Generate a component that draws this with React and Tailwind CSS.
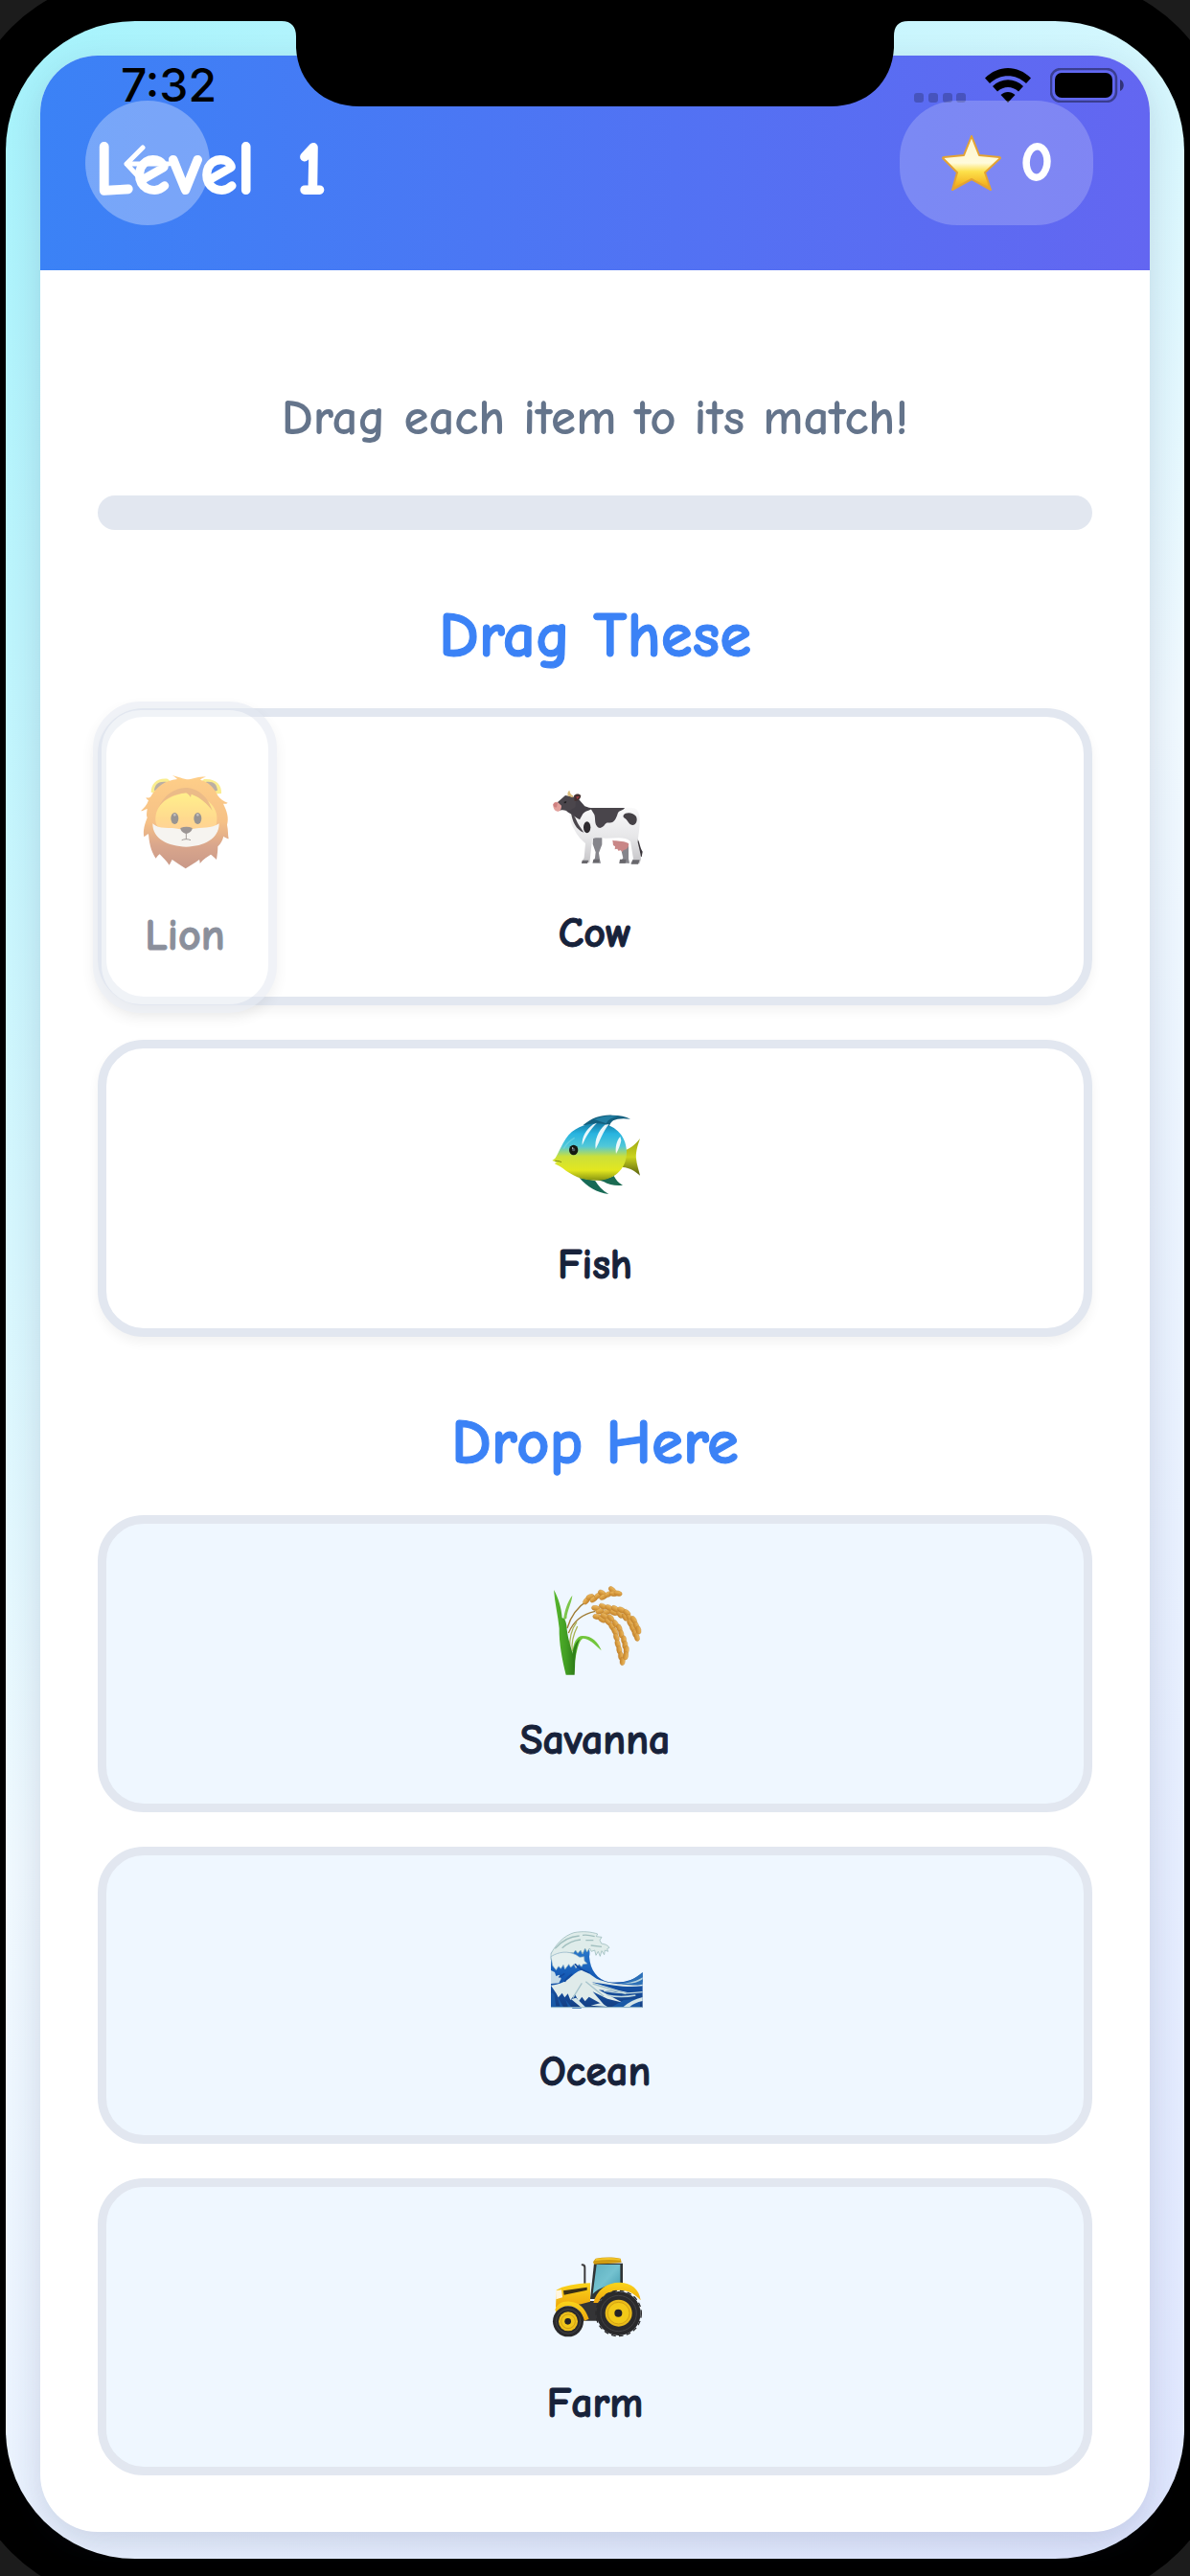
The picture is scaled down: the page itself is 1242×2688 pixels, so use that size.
function Cow() {
  return (
    <svg viewBox="93 87 300 300" className="size-[100px]" aria-hidden="true">
      <defs>
        <linearGradient id="cowBody" x1="0" y1="0" x2="0" y2="1">
          <stop offset="0" stopColor="#fbfbfb" />
          <stop offset="0.55" stopColor="#e6e6e8" />
          <stop offset="1" stopColor="#c4c3c6" />
        </linearGradient>
      </defs>
      <path d="M372 280c12 14 11 34 20 46l-3 17c-14-8-17-24-22-38z" fill="#39353a" />
      <path d="M237 280l28 0 0 24-10 26 3 20 3 12-26 0 8-16 2-18-9-26zM320 300l28 0 0 48 3 14-32 0 12-16z" fill="#85858b" />
      <path d="M160 196l40-14c20 6 30 8 48 8h85c32-6 48 0 50 30 1 30-4 52-6 76l9 40 1 14-5 14h-29l10-16-9-54c-20-18-52-8-80-10-20 0-30-4-40 4l-6 56-2 17h-25l8-16 4-45c-18-16-26-26-34-42-12-16-14-36-19-62z" fill="url(#cowBody)" />
      <path d="M146 190l13-34 28 0 24 28c10 4 16 5 26 6-10 8-24 8-32 18-4 6-6 12-10 18-12-6-24-16-38-24z" fill="#444047" />
      <path d="M168 204c16 14 14 22 24 38l16 24c-24-8-36-34-40-62z" fill="#4a464c" />
      <path d="M228 189h108c-5 10-18 6-22 18-4 14-10 26-20 28-10 2-14-2-20 6-6 10-18 16-25 5-8-10-4-24-8-36z" fill="#49454b" />
      <path d="M332 212c8-12 32-8 40 4 6 14-2 28-12 27-12-2-14-14-22-20-5-4-8-6-6-11z" fill="#454146" />
      <ellipse cx="218" cy="250" rx="11" ry="18" fill="#2e2b2f" />
      <path d="M298 290c14 4 30 0 50 10 2 10-4 20-16 21l-3 6-5-5-8 1-3-6-8 2 1-9-6-4z" fill="#c98787" />
      <path d="M150 150l34 6-2 30-22 14c-8-2-14-6-22-4l-12 3c-6-6-6-18 0-28z" fill="#4b464c" />
      <path d="M126 171c-8-2-15 3-14 12 1 11 8 18 16 17 8-2 10-10 10-18z" fill="#e2a09c" />
      <path d="M112 178c4-5 9-7 14-4l-3 13c-6 2-11-2-11-9z" fill="#cf8080" />
      <path d="M146 170l8-2-2 6-6 1z" fill="#1f1d20" />
      <path d="M158 151c-2-8 0-13 5-17 2 9 4 14 12 17l-3 6z" fill="#dcbd7c" />
      <path d="M177 151c7-7 17-7 22 0-2 11-8 16-20 17z" fill="#44302f" />
      <path d="M184 154l11-1-8 9z" fill="#a33d42" />
      <path d="M203 353h20l-4 10h-18zM238 350h20l-3 10h-19zM321 350h20l-3 12h-19zM361 352h22l-5 13h-22z" fill="#68676c" />
    </svg>
  );
}

function Fish() {
  return (
    <svg viewBox="93 75 300 300" className="size-[100px]" aria-hidden="true">
      <defs>
        <linearGradient id="fishBody" x1="0" y1="0" x2="0" y2="1">
          <stop offset="0" stopColor="#167ea8" />
          <stop offset="0.18" stopColor="#28b4e0" />
          <stop offset="0.4" stopColor="#52c8d8" />
          <stop offset="0.58" stopColor="#cbe03a" />
          <stop offset="0.82" stopColor="#e3e71f" />
          <stop offset="1" stopColor="#869411" />
        </linearGradient>
        <linearGradient id="fishTail" x1="0" y1="0" x2="0" y2="1">
          <stop offset="0" stopColor="#9ba512" />
          <stop offset="0.5" stopColor="#cad31d" />
          <stop offset="1" stopColor="#58600e" />
        </linearGradient>
      </defs>
      <path d="M205 133c28-24 60-34 92-32 24 0 42 4 57 12-22-3-42-2-54 5-8 6-10 12-14 20z" fill="#14607f" />
      <path d="M240 114c26-10 56-14 80-9-24 2-34 8-42 22z" fill="#227fa3" />
      <path d="M194 297c16 4 34 4 50 10 8 14 22 30 42 41-38-5-66-22-92-51z" fill="#176a55" />
      <path d="M250 303c18 0 34-4 52-12 6 12 14 22 28 29-20 3-44-1-60-11z" fill="#1b6b52" />
      <path d="M330 212c20-2 38-18 54-38-10 28-14 48-12 64 2 18 8 34 12 52-16-14-32-24-54-26z" fill="url(#fishTail)" />
      <path d="M109 243l9-7c12-18 18-38 34-62 22-32 60-48 102-47 48 1 86 36 88 86 2 52-34 88-84 92-48 4-86-14-116-38-10-6-16-10-20-11l-6-4 8-3z" fill="url(#fishBody)" />
      <path d="M237 130l12-5c-22 22-34 42-46 70-2-26 12-48 34-65zM274 131l13-2c-20 24-28 52-42 78-4-30 8-56 29-76zM322 168l3 12c-4 18-8 28-16 42-3-20 1-40 13-54z" fill="#fff" opacity="0.9" />
      <path d="M145 206c7-14 20-26 34-34" stroke="#7fd7e4" strokeWidth="4" fill="none" opacity="0.6" />
      <ellipse cx="176" cy="210" rx="14" ry="16" fill="#151912" />
      <circle cx="176" cy="209" r="5" fill="#4d5660" />
      <circle cx="173" cy="204" r="2" fill="#fff" />
      <path d="M118 244c8 0 14 1 20 4" stroke="#7e8810" strokeWidth="3" fill="none" />
    </svg>
  );
}

const GRAINS = [
  [276, 154, -50], [288, 142, -20], [299, 149, -35], [313, 138, -30], [325, 130, 30], [329, 142, -25], [345, 134, -25], [357, 120, 40], [361, 132, 10], [375, 131, 15],
  [305, 177, 10], [318, 187, -15], [328, 172, 25], [341, 189, -20], [347, 176, 25], [362, 191, 20], [366, 179, 30], [381, 197, 50], [386, 183, 25], [397, 205, 60], [403, 192, 45], [411, 208, 60], [413, 224, 65], [424, 214, 60], [421, 240, 65], [432, 232, 70], [428, 256, 75], [439, 246, 80], [434, 268, 75],
  [309, 204, 10], [325, 213, 30], [332, 202, 30], [344, 220, 45], [352, 208, 50], [356, 235, 60], [367, 226, 60], [365, 250, 65], [379, 240, 70], [370, 269, 70], [385, 258, 80], [374, 289, 75], [393, 276, 85], [379, 308, 80], [397, 293, 90], [384, 327, 85], [401, 308, 95], [389, 343, 95], [399, 326, 100],
];

function Rice() {
  return (
    <svg viewBox="153 96 300 300" className="size-[100px]" aria-hidden="true">
      <defs>
        <linearGradient id="riceStem" x1="0" y1="0" x2="1" y2="0">
          <stop offset="0" stopColor="#58b82f" />
          <stop offset="0.6" stopColor="#419d22" />
          <stop offset="1" stopColor="#2f7d18" />
        </linearGradient>
        <linearGradient id="riceGrain" x1="0" y1="0" x2="0" y2="1">
          <stop offset="0" stopColor="#efbd62" />
          <stop offset="1" stopColor="#c58329" />
        </linearGradient>
      </defs>
      <path d="M216 240c10-34 34-68 66-88l40-20M220 255c16-38 44-60 84-68" stroke="#a07c35" strokeWidth="4" fill="none" />
      <path d="M224 310c-2-36 4-66 22-90M232 312c-4-28 4-54 16-78" stroke="#a9b455" strokeWidth="4" fill="none" />
      <path d="M204 215c4-30 12-56 28-78-2 24-16 46-18 72z" fill="#7cc64b" />
      <path d="M232 320c2-34 14-56 32-56 30 0 48 18 59 46-20-20-40-38-58-38-14 8-18 38-25 70z" fill="#72c63c" />
      <path d="M174 120c14 24 24 56 26 88 10 2 12 12 14 24 2 34 12 64 20 90 6 20 6 42 5 64h-27c-12-48-22-100-21-146-4-40-14-80-17-120z" fill="url(#riceStem)" />
      <path d="M240 385c0-50 2-84 16-112-18 14-22 34-24 52z" fill="#2f8119" />
      {GRAINS.map(([x, y, r]) => (
        <ellipse key={`${x}-${y}`} cx={x} cy={y} rx="13" ry="8" fill="url(#riceGrain)" stroke="#b9792a" strokeWidth="1" transform={`rotate(${r} ${x} ${y})`} />
      ))}
    </svg>
  );
}

function Wave() {
  return (
    <svg viewBox="153 51 300 300" className="size-[100px]" aria-hidden="true">
      <defs>
        <linearGradient id="waveDeep" x1="0" y1="0" x2="0" y2="1">
          <stop offset="0" stopColor="#2f7fd0" />
          <stop offset="0.5" stopColor="#155bb6" />
          <stop offset="1" stopColor="#153f83" />
        </linearGradient>
      </defs>
      <path d="M165 175c20-22 60-40 100-32 20 8 24 24 20 42 4 44 24 70 62 80 46 4 80-6 105-30v110H165z" fill="url(#waveDeep)" />
      <path d="M165 176c16-30 40-56 72-66 30-6 56-2 74 4l-4 8 17 2-6 10 5 10c10 2 20 4 25 13l-7 4 3 8-10-4-2 14-8-12-5 17-6-15-7 12-4-16-10 4-6-10-8 12-6-12-8 18-6-12-9 10-7-10-6 8c-24 0-52 6-71 22z" fill="#dfecea" stroke="#8fb2b3" strokeWidth="2" />
      <path d="M178 160c20-24 44-38 76-40M200 158c18-16 34-24 58-26M264 118c12-2 24 0 38 4M274 134l24 0M290 150l34 4" stroke="#a1bfbf" strokeWidth="4" fill="none" />
      <path d="M165 185c26-16 52-18 78-6l12 8 14-2 1 14 9 8-14 2-4 8-8-8-10 12-6-12-10 10-6-10-12 16-5-14-8 12-7-8-8 12-11-14z" fill="#e5f0ef" stroke="#8aaec2" strokeWidth="2" />
      <path d="M165 228l12 6 4 12 10-4 6 12-7 14-25 2z" fill="#c6dce9" />
      <path d="M165 275c20-2 38-8 52-18 16-12 28-28 46-30 22 4 36 28 64 34 34 12 76 14 125 4v12c-34 4-60 2-88-2l-72-10 86 26 36 8-100-10 76 40-48-12-46-22 38 44-50-28-12 14-10-14-10 14-12-22-14 18-8-20-10 12-8-14-12 14-6-12z" fill="#dfebea" />
      <path d="M274 263l56 46M262 268l-28 46M296 270l104 32" stroke="#a6c4cc" strokeWidth="4" fill="none" />
      <path d="M165 298l10 4 6 38h12l-8-30 20 34h14l-8-24 22 28h28l-12-24 32 21h70l42-24 51-4v28H165z" fill="#1b5fae" opacity="0.8" />
      <path d="M392 342c16-14 36-24 60-30v12c-18 4-30 10-40 18zM290 338l32-8 20 12zM228 318l16-4 30 30h-14z" fill="#d5e6e8" />
      <path d="M378 268c24-2 48-12 74-34v38c-24 4-50 4-74-4z" fill="#2c70b8" />
      <path d="M388 268c26 0 44-6 64-18v6c-18 12-40 16-64 12z" fill="#b8d5df" />
      <path d="M330 292c40 8 80 10 122 4M340 306c30 6 60 6 90 0" stroke="#c3dade" strokeWidth="4" fill="none" />
      <path d="M240 208c8 10 22 20 46 28M190 250l18-12M208 264c6-12 14-18 24-24" stroke="#134a9e" strokeWidth="5" fill="none" />
      <path d="M165 344h287" stroke="#a6c6cf" strokeWidth="3" />
    </svg>
  );
}

function Tractor() {
  return (
    <svg viewBox="153 66 300 300" className="size-[100px]" aria-hidden="true">
      <defs>
        <linearGradient id="tractorGlass" x1="0" y1="0" x2="1" y2="1">
          <stop offset="0" stopColor="#5fb0bf" />
          <stop offset="0.5" stopColor="#74c2d0" />
          <stop offset="1" stopColor="#3f98ac" />
        </linearGradient>
        <linearGradient id="tractorPaint" x1="0" y1="0" x2="0" y2="1">
          <stop offset="0" stopColor="#fbd51b" />
          <stop offset="1" stopColor="#eea60c" />
        </linearGradient>
      </defs>
      <path d="M263 127c6 0 8 2 8 8v52" stroke="#3c3b3c" strokeWidth="6" fill="none" strokeLinecap="round" />
      <path d="M250 240h76v62h-66z" fill="#343436" />
      <path d="M300 122h90v72l-52 40h-50z" fill="#2f3436" />
      <path d="M308 126h74v62c-36-2-66 12-86 30z" fill="url(#tractorGlass)" />
      <path d="M297 118l8-11c26-5 54-5 78 0l3 12c-28 4-58 4-86 6z" fill="#cf9b11" />
      <path d="M306 108c26-4 52-4 76 0l1 5c-28-3-54-2-80 1z" fill="#f1c52a" />
      <path d="M182 206c24-14 58-20 106-22v58l-28 8-80 10z" fill="url(#tractorPaint)" />
      <path d="M204 208l74-11v9l-72 15z" fill="#3b3015" />
      <path d="M180 208l18-3 3 24-20 6z" fill="#fff6e0" />
      <path d="M178 268c6-18 22-28 46-26 30 2 48 20 60 54l-14 6c-8-28-24-42-44-46-16-2-32 2-44 20z" fill="url(#tractorPaint)" />
      <path d="M298 246c10-40 40-64 84-64 34 2 60 20 64 56-20-22-40-32-66-32-34 2-54 18-68 40z" fill="url(#tractorPaint)" />
      <circle cx="377" cy="279" r="69" fill="#2a2a2c" />
      <circle cx="377" cy="279" r="71" fill="none" stroke="#2a2a2c" strokeWidth="4" strokeDasharray="14 10" />
      <circle cx="377" cy="279" r="56" fill="none" stroke="#424245" strokeWidth="3" />
      <circle cx="377" cy="278" r="42" fill="#e9bb1b" />
      <circle cx="377" cy="278" r="34" fill="#f2c918" stroke="#c6930f" strokeWidth="2" />
      <circle cx="376" cy="278" r="12" fill="#242326" />
      <circle cx="219" cy="304" r="48" fill="#29292b" />
      <circle cx="219" cy="304" r="38" fill="none" stroke="#434346" strokeWidth="3" />
      <circle cx="219" cy="304" r="30" fill="#edc01c" />
      <circle cx="219" cy="304" r="22" fill="#f0c61a" stroke="#c08e10" strokeWidth="2" />
      <circle cx="218" cy="304" r="10" fill="#242326" />
    </svg>
  );
}

function Lion() {
  return (
    <svg viewBox="186 288 312 312" className="size-[104px]" aria-hidden="true">
      <defs>
        <linearGradient id="lionMane" x1="0" y1="0" x2="0" y2="1">
          <stop offset="0" stopColor="#ff9f14" />
          <stop offset="0.5" stopColor="#ee8410" />
          <stop offset="0.75" stopColor="#b5501c" />
          <stop offset="1" stopColor="#943413" />
        </linearGradient>
        <linearGradient id="lionFace" x1="0" y1="0" x2="0" y2="1">
          <stop offset="0" stopColor="#ffe11a" />
          <stop offset="0.6" stopColor="#ffb321" />
          <stop offset="1" stopColor="#ff9a3d" />
        </linearGradient>
      </defs>
      <path d="M236 350c0-28 20-46 52-42l20 20-40 30zM456 354c2-28-18-48-54-45l-22 20 40 28z" fill="#f7dc22" />
      <path d="M246 344c2-20 16-30 40-26l10 14-30 20zM444 344c-2-20-14-30-38-26l-12 14 30 20z" fill="#77614b" />
      <path d="M302 298c14 2 26 8 46 12 18 0 36-12 60-8-8 2-14 4-18 9 24 6 44 24 54 48 8 12 20 20 32 24-4 4-9 4-14 3 12 24 18 44 12 66 4 18 2 30 5 44-6-2-11-4-16-8-4 14-8 22-18 32 0 14-2 28-4 41-8-8-12-12-18-16-10 6-24 14-34 28 0-6-1-9-2-12-14 10-28 18-43 28-14-10-28-18-42-28l-9 17c-8-12-18-22-30-34-4 2-8 8-12 13-10-14-20-36-23-76-6 2-10 6-14 9-4-20 2-40 10-60-4-8-1-18 0-28-6 2-12 6-20 7 10-10 20-20 24-34-4-2-8-4-7-9 6 3 10 2 14-2 16-30 46-52 83-55-4-4-8-8-16-11z" fill="url(#lionMane)" />
      <path d="M252 450c-8-40 12-84 92-98 78 10 108 54 96 100-20 34-60 46-94 44-40 0-74-12-94-46z" fill="url(#lionFace)" />
      <path d="M241 448c20 20 52 10 86 18 12 2 24 2 36 0 32-8 62 0 86-18 0 48-48 72-103 73-56-2-106-24-105-73z" fill="#efebe2" />
      <path d="M258 400c14-24 40-44 88-48 6 4 10 8 14 14l2-10c28 10 50 30 66 52-18-58-60-72-84-72-34 2-66 20-86 64z" fill="#d87913" />
      <ellipse cx="310" cy="432" rx="12" ry="18" fill="#332b28" />
      <ellipse cx="382" cy="432" rx="12" ry="18" fill="#332b28" />
      <circle cx="310" cy="421" r="4" fill="#8b8480" />
      <circle cx="382" cy="421" r="4" fill="#8b8480" />
      <path d="M328 462c12-5 26-5 37 0 0 10-10 16-19 18-8-2-18-8-18-18z" fill="#3a2e2b" />
      <path d="M346 478v20M332 500c8-4 20-4 28 0" stroke="#463b36" strokeWidth="3" fill="none" />
    </svg>
  );
}

function Star() {
  return (
    <svg viewBox="0 0 64 60" className="h-[60px] w-[64px]" aria-hidden="true">
      <defs>
        <linearGradient id="starFill" x1="0" y1="0" x2="0" y2="1">
          <stop offset="0" stopColor="#fff6c9" />
          <stop offset="0.5" stopColor="#fffbdc" />
          <stop offset="0.66" stopColor="#fde14b" />
          <stop offset="1" stopColor="#f0a010" />
        </linearGradient>
      </defs>
      <path d="M32 2l8 20 21 2c1 0 1 1 1 1L46 40l6 18-20-11-20 11 5-18L2 25s0-1 1-1l21-2z" fill="url(#starFill)" stroke="#e3a334" strokeWidth="2" strokeLinejoin="round" />
    </svg>
  );
}

function StatusIcons() {
  return (
    <div className="flex items-end gap-5">
      <svg viewBox="0 0 54 10" className="h-[10px] w-[54px]" aria-hidden="true">
        <g fill="#000" opacity="0.22">
          <rect width="10" height="10" rx="3" />
          <rect x="15" width="10" height="10" rx="3" />
          <rect x="30" width="10" height="10" rx="3" />
          <rect x="44" width="10" height="10" rx="3" />
        </g>
      </svg>
      <svg viewBox="0 0 48 36" className="h-[36px] w-[48px]" aria-hidden="true">
        <path d="M0 10.500C14-3.500 34-3.500 48 10.500l-5 5.500C32 5.500 16 5.500 5 16zM8 19c9-9 23-9 32 0l-5 5.500c-6.500-6-15.500-6-22 0zM16.500 28c4.500-4 10.500-4 15 0L24 36z" />
      </svg>
      <svg viewBox="0 0 78 36" className="h-[36px] w-[78px]" aria-hidden="true">
        <rect x="1" y="1" width="68" height="34" rx="10" fill="none" stroke="#000" strokeOpacity="0.4" strokeWidth="2.500" />
        <rect x="5" y="5" width="60" height="26" rx="7" />
        <path d="M73 12c5 2 5 10 0 12z" opacity="0.5" />
      </svg>
    </div>
  );
}

function SectionTitle({ children }) {
  return (
    <h2 className="mt-[75px] text-center text-[67px] leading-[72px] font-bold text-[#3b82f6] [-webkit-text-stroke:1px_currentColor]">
      {children}
    </h2>
  );
}

function Tile({ children, label, target }) {
  return (
    <button
      type="button"
      className={
        target
          ? "flex h-[310px] w-full flex-col items-center rounded-[48px] border-[9px] border-[#e2e7f0] bg-[#eff7ff] pt-[61px]"
          : "flex h-[310px] w-full flex-col items-center rounded-[48px] border-[9px] border-[#e2e7f0] bg-white pt-[61px] shadow-[0_6px_12px_rgba(0,0,0,0.05)]"
      }
    >
      {children}
      <span className="mt-[41px] text-[44px] leading-[48px] font-bold text-[#17223a] [-webkit-text-stroke:1px_currentColor]">{label}</span>
    </button>
  );
}

export default function App() {
  return (
    <div className="flow-root overflow-hidden bg-[#1c1c1c] font-['Comic_Neue','Comic_Sans_MS',Inter,sans-serif]">
      <div className="-mx-[39px] -mt-[23px] -mb-[27px] rounded-[175px] bg-black p-[45px]">
        <div className="relative rounded-[135px] bg-[linear-gradient(135deg,#a5f3fc_0%,#f0f9ff_50%,#e0e7ff_100%)] px-9 pt-9 pb-7">
          <div className="absolute inset-x-0 top-0 flex justify-center" aria-hidden="true">
            <svg viewBox="0 0 654 89" className="h-[89px] w-[654px]">
              <path d="M0 0c10 0 15 6 15 16v12c2 36 28 61 66 61h492c38 0 64-25 66-61V16c0-10 4-16 15-16z" />
            </svg>
          </div>

          <main className="overflow-hidden rounded-[60px] bg-white shadow-[0_12px_36px_rgba(30,41,90,0.16)]">
            <header className="h-[224px] bg-[linear-gradient(90deg,#3b82f6,#6366f1)] pt-[10px]">
              <div className="flex items-center justify-between pr-[26px] pl-[84px]">
                <time className="font-[Inter] text-[48px] leading-[42px] font-medium text-black">7:32</time>
                <StatusIcons />
              </div>
              <div className="relative -mt-[5px] flex h-[130px] items-center justify-between pr-[59px] pl-[57px]">
                <button type="button" aria-label="Back" className="absolute left-[47px] flex size-[130px] items-center justify-center rounded-full bg-white/30 text-white">
                  <svg viewBox="0 0 50 38" className="h-[38px] w-[50px]" fill="none" stroke="currentColor" strokeWidth="5" strokeLinecap="round" strokeLinejoin="round" aria-hidden="true">
                    <path d="M20 3L3 20l14 15M3 20h44" />
                  </svg>
                </button>
                <h1 className="relative mt-[14px] text-[78px] leading-[80px] font-bold text-white [-webkit-text-stroke:2px_currentColor]">
                  Level <span className="ml-4">1</span>
                </h1>
                <div className="flex h-[130px] w-[202px] items-center justify-center gap-5 rounded-[60px] bg-white/20">
                  <Star />
                  <span className="text-[57px] leading-[60px] font-bold text-white [-webkit-text-stroke:2px_currentColor]">0</span>
                </div>
              </div>
            </header>

            <div className="px-[60px] pt-[120px] pb-[59px]">
              <p className="text-center text-[53px] leading-[68px] font-bold text-[#64748b]">Drag each item to its match!</p>
              <div role="progressbar" aria-label="Matches" aria-valuenow={0} aria-valuemin={0} aria-valuemax={3} className="mt-[47px] h-9 rounded-full bg-[#e2e7f0]" />

              <section>
                <SectionTitle>Drag These</SectionTitle>
                <div className="relative mt-[39px] flex flex-col gap-9">
                  <Tile label="Cow"><Cow /></Tile>
                  <Tile label="Fish"><Fish /></Tile>
                  <button type="button" className="absolute -top-[7px] -left-[5px] flex h-[325px] w-[192px] flex-col items-center rounded-[50px] border-[9px] border-[#e2e7f0] bg-white pt-[65px] opacity-50 shadow-[0_6px_12px_rgba(0,0,0,0.1)]">
                    <Lion />
                    <span className="mt-[43px] text-[46px] leading-[48px] font-bold text-[#17223a] [-webkit-text-stroke:1px_currentColor]">Lion</span>
                  </button>
                </div>
              </section>

              <section>
                <SectionTitle>Drop Here</SectionTitle>
                <div className="mt-[39px] flex flex-col gap-9">
                  <Tile target label="Savanna"><Rice /></Tile>
                  <Tile target label="Ocean"><Wave /></Tile>
                  <Tile target label="Farm"><Tractor /></Tile>
                </div>
              </section>
            </div>
          </main>
        </div>
      </div>
    </div>
  );
}
